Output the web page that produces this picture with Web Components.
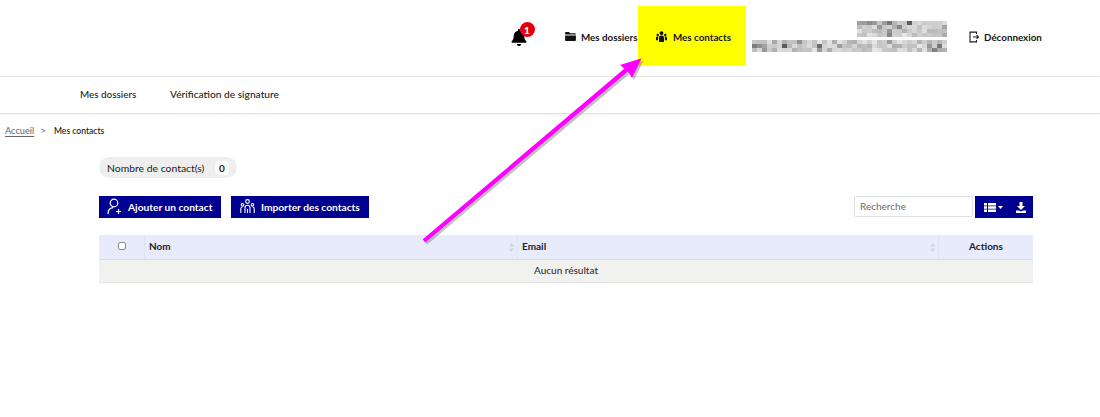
<!DOCTYPE html>
<html lang="fr"><head><meta charset="utf-8"><title>Mes contacts</title>
<style>
html,body{margin:0;padding:0;background:#fff}
body{width:1100px;height:417px;overflow:hidden;font-family:Lato,"Liberation Sans",sans-serif;color:#1e1e1e;position:relative}
</style></head><body>
<app-header></app-header>
<app-subnav></app-subnav>
<app-crumbs></app-crumbs>
<contacts-panel></contacts-panel>
<annot-arrow></annot-arrow>
<script>
function def(name,html){customElements.define(name,class extends HTMLElement{constructor(){super();this.attachShadow({mode:'open'}).innerHTML=html;}});}

function blur(w,h,seed,rows){
  let s=seed,o='';
  const rnd=()=>{s=(s*9301+49297)%233280;return s/233280;};
  for(const [x0,x1,y0,y1] of rows){
    for(let y=y0;y<y1;y+=4)for(let x=x0;x<x1;x+=5){
      const a=rnd(),b=rnd(),c=rnd();
      const v=Math.round(235-a*b*b*130-c*40);
      o+=`<rect x="${x}" y="${y}" width="5" height="4" fill="rgb(${v},${v},${v})"/>`;
    }
  }
  return `<svg width="${w}" height="${h}" viewBox="0 0 ${w} ${h}" aria-hidden="true">${o}</svg>`;
}

def('nav-link',`<style>
:host{display:inline-flex;align-items:center;gap:5px;box-sizing:border-box;padding-top:1px;font-size:9.800px;font-weight:700;color:#161616;white-space:nowrap}
</style><slot name="icon"></slot><slot></slot>`);

def('app-header',`<style>
:host{display:flex;box-sizing:border-box;height:77px;border-bottom:1px solid #e6e6e6;align-items:flex-start;padding-top:6px}
.bell{position:relative;display:block;flex:none;width:24px;height:24px;margin-left:510px;margin-top:17px}
.badge{position:absolute;left:9.500px;top:-1px;width:15px;height:15px;border-radius:50%;background:#e1000f;color:#fff;font-size:10px;font-weight:900;display:flex;align-items:center;justify-content:center}
.doss{margin-left:31px;height:60px;width:73px;flex:none}
.hl{display:flex;box-sizing:border-box;width:108px;height:60px;background:#ff0;align-items:center;padding-left:18px;flex:none}
.hl nav-link{gap:6px}
.user{margin:10px 0 0 6px;width:195px;height:48px;flex:none;display:block;filter:blur(.5px)}
.out{margin-left:22px;height:60px;flex:none}
svg{display:block}
</style>
<div class="bell">
  <svg width="16" height="17" viewBox="0 0 448 512" style="position:absolute;left:1px;top:6px"><path fill="#000" d="M224 512c35 0 64-29 64-64H160c0 35 29 64 64 64zm215-150c-19-21-56-52-56-154 0-78-54-140-128-155V32a32 32 0 0 0-64 0v21C117 68 64 130 64 208c0 102-36 133-56 154-6 6-8 13-8 22 0 16 13 32 32 32h384c19 0 32-16 32-32 0-9-3-16-9-22z"/></svg>
  <span class="badge">1</span>
</div>
<nav-link class="doss"><svg slot="icon" width="11" height="9" viewBox="0 0 12 10"><path fill="#111" d="M0 1.200C0 .5.5 0 1.200 0h3.200l1.200 1.300h5.200c.7 0 1.200.5 1.200 1.200v.4H0zM0 3.800h12v5C12 9.500 11.500 10 10.800 10H1.200C.5 10 0 9.500 0 8.800z"/></svg>Mes dossiers</nav-link>
<div class="hl"><nav-link><svg slot="icon" width="11" height="11" viewBox="0 0 12 12"><circle cx="6" cy="2.300" r="2.100" fill="#111"/><circle cx="1.900" cy="4.300" r="1.300" fill="#111"/><circle cx="10.100" cy="4.300" r="1.300" fill="#111"/><path fill="#111" d="M3.300 12V7.300C3.300 5.900 4.300 5 5.300 5h1.400c1 0 2 .9 2 2.300V12zM0 10V7.400C0 6.400.7 6 1.500 6h1L2.200 10zM12 10V7.400C12 6.400 11.300 6 10.500 6h-1l.3 4z"/></svg>Mes contacts</nav-link></div>
<div class="user">${blur(195,48,37,[[105,195,5,21],[0,195,24,36]])}</div>
<nav-link class="out"><svg slot="icon" width="10" height="12" viewBox="0 0 10 12" fill="none" stroke="#1c1c1c" stroke-width="1.100"><path d="M7.500 3V1.100H1V10.900H7.500V9"/><path d="M4 6h5.500M7.600 4.200 9.500 6 7.600 7.800"/></svg>Déconnexion</nav-link>`);

def('app-subnav',`<style>
:host{display:flex;box-sizing:border-box;height:37px;align-items:center;padding:0 0 2px 80px;font-size:9.900px;font-weight:500;color:#222;border-bottom:1px solid #e4e4e4;box-shadow:0 1px 2px rgba(0,0,0,.06)}
.a{width:90px}.b{font-size:10.200px}
</style><span class="a">Mes dossiers</span><span class="b">Vérification de signature</span>`);

def('app-crumbs',`<style>
:host{display:flex;align-items:center;height:14px;margin-top:9px;padding-left:5px;font-size:9.200px;color:#222;gap:6px}
a{color:#666;text-decoration:underline;text-underline-offset:2px}
i{font-style:normal;color:#666;font-size:10px}
b{font-weight:500;color:#111;font-size:8.600px;margin:1px 0 0 2px}
</style><a>Accueil</a><i>&gt;</i><b>Mes contacts</b>`);

def('action-btn',`<style>
:host{display:inline-flex;box-sizing:border-box;height:22px;background:#000091;color:#fff;align-items:center;gap:7px;padding:0 0 1px 8px;font-size:10.200px;font-weight:700;white-space:nowrap}
</style><slot name="icon"></slot><slot></slot>`);

def('count-pill',`<style>
:host{display:inline-flex;box-sizing:border-box;width:138px;height:21px;background:#eee;border-radius:11px;align-items:center;padding-left:8px;font-size:10.400px;color:#222;justify-content:space-between;padding-right:8px}
b{display:flex;width:14px;height:14px;background:#fbfbfb;border-radius:3px;align-items:center;justify-content:center;font-size:10px;font-weight:700}
</style><span><slot></slot></span><b>0</b>`);

def('contacts-table',`<style>
:host{display:grid;grid-template-columns:46px 373px 421px 94px;font-size:10px;font-weight:700;color:#222}
.h{box-sizing:border-box;height:25px;background:#e8ebfb;border-bottom:1px solid #d9dbe6;border-right:1px solid #dfe2f4;display:flex;align-items:center;position:relative;padding:0 0 2px 4px}
.a{border-right:0;justify-content:center;padding:0 0 2px}
.c{justify-content:center;padding:0 0 3px}
.c span{display:block;box-sizing:border-box;width:8px;height:8px;border:1px solid #888;border-radius:2px;background:#fff}
.s{position:absolute;right:3px;top:8px}
.e{grid-column:1/-1;box-sizing:border-box;height:23px;background:#f1f1f0;border-bottom:1px solid #e2e2e2;display:flex;align-items:center;justify-content:center;font-weight:500;font-size:10px;color:#333;padding-bottom:3px}
</style>
<div class="h c"><span></span></div>
<div class="h">Nom<svg class="s" width="5" height="9" viewBox="0 0 5 9"><path fill="#d2d4de" d="M2.500 0 5 3.500H0zM2.500 9 0 5.500H5z"/></svg></div>
<div class="h">Email<svg class="s" width="5" height="9" viewBox="0 0 5 9"><path fill="#d2d4de" d="M2.500 0 5 3.500H0zM2.500 9 0 5.500H5z"/></svg></div>
<div class="h a">Actions</div>
<div class="e">Aucun résultat</div>`);

def('contacts-toolbar',`<style>
:host{display:flex;align-items:flex-start;gap:10px}
.grow{flex:1}
.search{box-sizing:border-box;width:119px;height:21px;border:1px solid #dcdfe6;border-radius:2px;background:#fff;font-size:10px;color:#6d6d6d;padding:0 0 2px 5px;display:flex;align-items:center}
.grp{display:flex;box-sizing:border-box;width:58px;height:22px;background:#000091;margin-left:-8px;align-items:center;justify-content:space-between;padding:0 7px 0 9px}
svg{display:block}
.m{display:flex;align-items:center;gap:2px}
</style>
<action-btn style="width:122px"><svg slot="icon" width="15" height="17" viewBox="0 0 15 17" fill="none" stroke="#fff" stroke-width="1.200"><circle cx="7" cy="5" r="3.800"/><path d="M1 16c0-3.500 2.200-6 5-6.300M11.500 11v5M9 13.500h5" /></svg><span style="margin-left:-1px">Ajouter un contact</span></action-btn>
<action-btn style="width:138px;padding-left:9px"><svg slot="icon" width="15" height="15" viewBox="0 0 15 15" fill="none" stroke="#fff" stroke-width="1.100"><circle cx="7.500" cy="2.500" r="1.900"/><circle cx="2.500" cy="5.800" r="1.300"/><circle cx="12.500" cy="5.800" r="1.300"/><path d="M5 14V8.500C5 7 6 6.300 7.500 6.300S10 7 10 8.500V14M7.500 10v4M.8 14V9.500c0-.8.500-1.300 1.500-1.300M14.200 14V9.500c0-.8-.500-1.300-1.500-1.300"/></svg><span style="margin-left:-1px">Importer des contacts</span></action-btn>
<div class="grow"></div>
<div class="search">Recherche</div>
<div class="grp">
<div class="m"><svg width="12" height="9" viewBox="0 0 12 9"><path fill="#fff" d="M0 0h3v2.500H0zM4 0h8v2.500H4zM0 3.250h3v2.500H0zM4 3.250h8v2.500H4zM0 6.500h3V9H0zM4 6.500h8V9H4z"/></svg><svg width="5" height="3" viewBox="0 0 5 3"><path fill="#fff" d="M0 0h5L2.500 3z"/></svg></div>
<svg width="10" height="11" viewBox="0 0 10 11"><path fill="#fff" d="M3.500 0h3v4H9L5 8 1 4h2.500zM0 8.500h3L5 9.500l2-1h3V11H0z"/></svg>
</div>`);

def('contacts-panel',`<style>
:host{display:flex;flex-direction:column;width:934px;margin:20px 0 0 99px}
count-pill{align-self:flex-start}
contacts-toolbar{margin-top:18px}
contacts-table{margin-top:17px}
</style><count-pill>Nombre de contact(s)</count-pill><contacts-toolbar></contacts-toolbar><contacts-table></contacts-table>`);

def('annot-arrow',`<style>
:host{position:absolute;left:0;top:0;width:1100px;height:417px;pointer-events:none}
</style><svg width="1100" height="417" viewBox="0 0 1100 417">
<g fill="#8c8c8c" opacity=".55" transform="translate(2,2)"><path d="M422.800 239.200 425.200 242.400 628 71.500 632 78 641.700 58.300 620 65 624.500 68.500Z"/></g>
<path fill="#ff00ff" d="M422.800 239.200 425.200 242.400 628 71.500 632 78 641.700 58.300 620 65 624.500 68.500Z"/></svg>`);
</script>
</body></html>
